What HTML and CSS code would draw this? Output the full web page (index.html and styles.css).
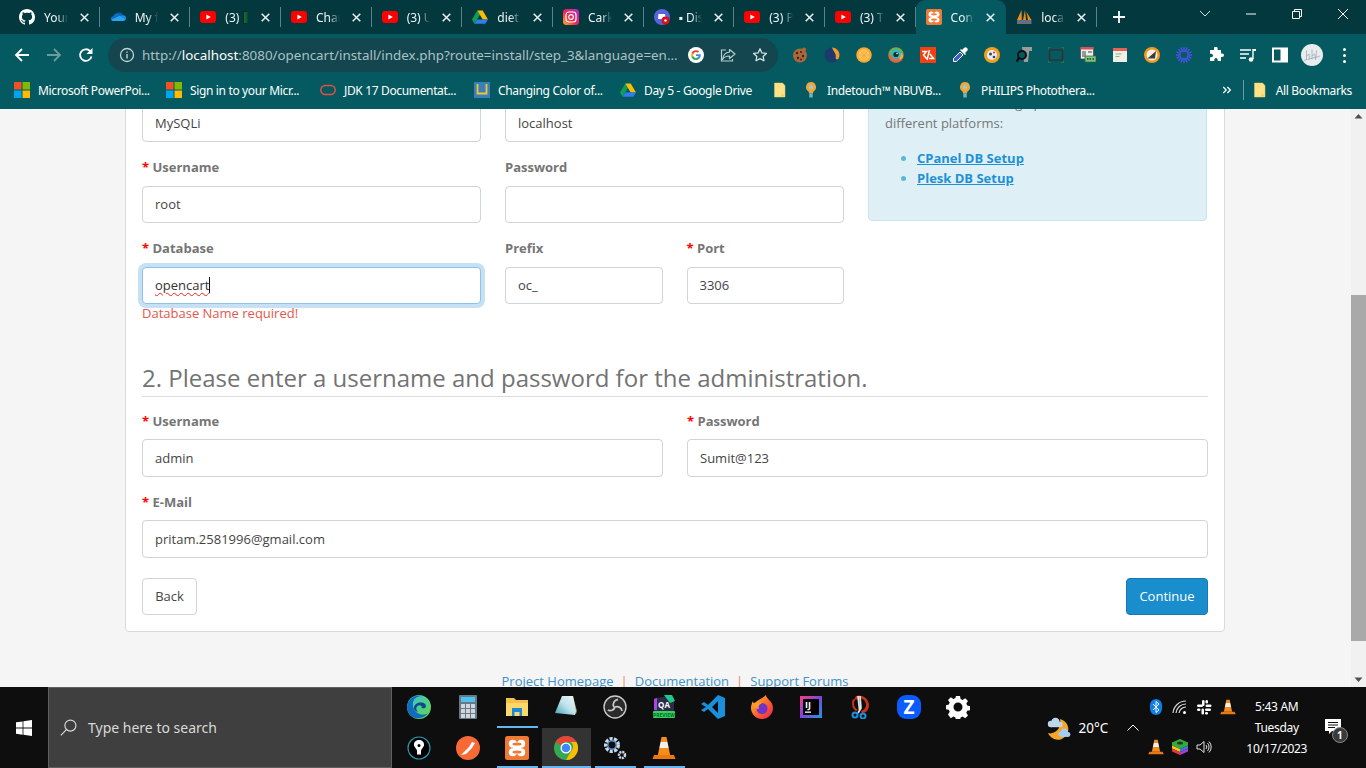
FILE: index.html
```html
<!DOCTYPE html>
<html lang="en">
<head>
<meta charset="utf-8">
<title>OpenCart Installer</title>
<link rel="stylesheet" href="styles.css">
</head>
<body>
<svg class="defs" aria-hidden="true">
<defs>
<symbol id="x" viewBox="0 0 9 9"><path d="M.7.7l7.600 7.600M8.300.7.700 8.300" stroke="#edf3f3" stroke-width="1.500"/></symbol>
<symbol id="yt" viewBox="0 0 16 16"><rect y="2" width="16" height="12" rx="3.200" fill="#f00"/><path d="M6.400 5.400v5.200L10.800 8z" fill="#fff"/></symbol>
<symbol id="gh" viewBox="0 0 16 16"><path fill="#fff" d="M8 0C3.580 0 0 3.580 0 8c0 3.540 2.290 6.530 5.470 7.590.4.070.55-.17.55-.38 0-.19-.01-.82-.01-1.490-2.010.37-2.530-.49-2.690-.94-.09-.23-.48-.94-.82-1.130-.28-.15-.68-.52-.01-.53.63-.01 1.080.58 1.230.82.72 1.210 1.870.87 2.330.66.07-.52.28-.87.51-1.070-1.780-.2-3.640-.89-3.640-3.950 0-.87.31-1.590.82-2.150-.08-.2-.36-1.020.08-2.120 0 0 .67-.21 2.200.82.64-.18 1.320-.27 2-.27.68 0 1.360.09 2 .27 1.530-1.040 2.200-.82 2.200-.82.44 1.100.16 1.920.08 2.120.51.56.82 1.270.82 2.150 0 3.070-1.870 3.750-3.650 3.950.29.25.54.73.54 1.480 0 1.070-.01 1.930-.01 2.200 0 .21.15.46.55.38A8.013 8.013 0 0016 8c0-4.420-3.580-8-8-8z"/></symbol>
<symbol id="od" viewBox="0 0 16 16"><path fill="#0c5fb8" d="M6.400 4.600a4 4 0 0 1 6.600 1.700 3 3 0 0 1 .4 0L9 10z"/><path fill="#1490df" d="M6.400 4.600 9.600 7l3.400-.7a2.700 2.700 0 0 1 3 3 2.600 2.600 0 0 1-.4 1.300L9 9z"/><path fill="#0b6fc9" d="M6.400 4.600A3.600 3.600 0 0 0 3.500 7 3 3 0 0 0 1 10.400L7 8.600l2.600-1.600z"/><path fill="#2aa4f0" d="M1 10.400a2.600 2.600 0 0 0 2.400 1.700H13.500a2.700 2.700 0 0 0 2.100-1.500L9.600 7z"/></symbol>
<symbol id="drive" viewBox="0 0 16 16"><path fill="#0f9d58" d="M5.300 1.500 0 10.600l2.600 4.100L8 5.700z"/><path fill="#fbbc04" d="M5.300 1.500h5.400L16 10.600h-5.300z"/><path fill="#2f7df0" d="M2.600 14.700h10.800l2.600-4.100H5.300z"/></symbol>
<symbol id="ig" viewBox="0 0 16 16"><defs><linearGradient id="iggrad" x1="0" y1="1" x2="1" y2="0"><stop offset="0" stop-color="#fdb32b"/><stop offset=".45" stop-color="#f0254f"/><stop offset="1" stop-color="#a62bd0"/></linearGradient></defs><rect width="16" height="16" rx="3.500" fill="url(#iggrad)"/><rect x="3" y="3" width="10" height="10" rx="3" fill="none" stroke="#fff" stroke-width="1.200"/><circle cx="8" cy="8" r="2.300" fill="none" stroke="#fff" stroke-width="1.200"/></symbol>
<symbol id="disc" viewBox="0 0 16 16"><circle cx="8" cy="8" r="8" fill="#5865d8"/><path d="M4.500 5h6.500l.8 5H9.500l-1 .6L7 10H4z" fill="#fff"/><circle cx="11.500" cy="11.500" r="4" fill="#d9101c"/><circle cx="11.500" cy="11.500" r="1.200" fill="#fff"/></symbol>
<symbol id="xampp" viewBox="0 0 24 24"><rect width="24" height="24" rx="2.500" fill="#ef7a35"/><g fill="#fff"><circle cx="7.800" cy="7.800" r="4"/><circle cx="16.200" cy="7.800" r="4"/><circle cx="7.800" cy="16.200" r="4"/><circle cx="16.200" cy="16.200" r="4"/><rect x="8" y="6" width="8" height="12"/></g><g fill="#ef7a35"><ellipse cx="12" cy="8" rx="4.600" ry="1.600"/><ellipse cx="12" cy="16" rx="4.600" ry="1.600"/></g></symbol>
<symbol id="pma" viewBox="0 0 16 16"><path d="M5.500 1 1 11h4.800zM9 1 7 11h3zM10.500 3l1.500 8h3.500z" fill="#ef8c1c"/><rect x="1" y="11" width="14.500" height="4" fill="#666e80"/></symbol>
<symbol id="win" viewBox="0 0 16 16"><path fill="#f25022" d="M0 0h7.500v7.500H0z"/><path fill="#7fba00" d="M8.500 0H16v7.500H8.500z"/><path fill="#00a4ef" d="M0 8.500h7.500V16H0z"/><path fill="#ffb900" d="M8.500 8.500H16V16H8.500z"/></symbol>
<symbol id="oracle" viewBox="0 0 16 16"><rect x=".8" y="3.500" width="14.400" height="9" rx="4.500" fill="none" stroke="#e4503c" stroke-width="1.500"/></symbol>
<symbol id="ublue" viewBox="0 0 16 16"><rect width="16" height="16" fill="#3b7fb8"/><path d="M3.500 2v9.500h9V2" fill="none" stroke="#f0c636" stroke-width="1.800"/></symbol>
<symbol id="note" viewBox="0 0 16 16"><path d="M2.500 1h8L13 3.500V15H2.500z" fill="#fde28a" stroke="#e9c95f" stroke-width=".5"/><path d="M9.500 15v-2.500H13z" fill="#e9c95f"/></symbol>
<symbol id="pin" viewBox="0 0 16 16"><path d="M8 0a5 5 0 0 0-3 9c.8.700 1 1.500 1 2.500h4c0-1 .2-1.800 1-2.500A5 5 0 0 0 8 0z" fill="#f0a63a"/><circle cx="8" cy="5" r="2" fill="#8ed0e0"/><rect x="6.300" y="11.500" width="3.400" height="4" fill="#6fb5c6"/></symbol>
<symbol id="chev2" viewBox="0 0 16 16"><path d="M3 4l4 4-4 4M8.500 4l4 4-4 4" fill="none" stroke="#fff" stroke-width="1.700"/></symbol>
<symbol id="g" viewBox="0 0 16 16"><circle cx="8" cy="8" r="8" fill="#fff"/><path d="M12.700 8.200c0-.4 0-.7-.1-1H8v1.900h2.600a2.300 2.300 0 0 1-1 1.500v1.200h1.600c1-.9 1.500-2.200 1.500-3.600z" fill="#4285f4"/><path d="M8 13c1.300 0 2.400-.4 3.200-1.200l-1.600-1.200c-.4.300-1 .5-1.600.5-1.300 0-2.300-.8-2.700-2H3.600v1.300A5 5 0 0 0 8 13z" fill="#34a853"/><path d="M5.300 9.100a3 3 0 0 1 0-2V5.800H3.600a5 5 0 0 0 0 4.500z" fill="#fbbc05"/><path d="M8 5c.7 0 1.300.2 1.800.7l1.400-1.400A5 5 0 0 0 3.600 5.800l1.700 1.300C5.700 5.900 6.700 5 8 5z" fill="#ea4335"/></symbol>
<symbol id="share" viewBox="0 0 16 16"><path d="M9.500 2.500 15 7l-5.500 4.500V9C6 9 4 10 2.500 12.500 3 8.500 5.500 5.500 9.500 5z" fill="none" stroke="#b9cccd" stroke-width="1.200" stroke-linejoin="round"/><path d="M6 3H1.500v11h11v-2" fill="none" stroke="#b9cccd" stroke-width="1.200"/></symbol>
<symbol id="star" viewBox="0 0 16 16"><path d="M8 1.800l1.900 4.100 4.500.5-3.300 3 .9 4.400L8 11.600 4 13.800l.9-4.400-3.300-3 4.500-.5z" fill="none" stroke="#d5e0e1" stroke-width="1.300" stroke-linejoin="round"/></symbol>
<symbol id="cookie" viewBox="0 0 16 16"><circle cx="8" cy="8.500" r="7" fill="#a9683a"/><circle cx="12" cy="2.500" r="2" fill="#a9683a"/><g fill="#3f2415"><circle cx="5" cy="6" r="1.200"/><circle cx="9" cy="5" r="1"/><circle cx="11" cy="9" r="1.200"/><circle cx="6" cy="11" r="1.200"/><circle cx="9" cy="12.500" r=".9"/></g></symbol>
<symbol id="moonbi" viewBox="0 0 16 16"><circle cx="8" cy="8" r="7.500" fill="#1d3a6e"/><path d="M8 .5a7.500 7.500 0 0 1 6.500 11.200c-.7.800-1.800 1.100-2.500.3-.8-1 .2-2.500-.5-4.500C10.800 5 9 3.500 8 .5z" fill="#f39c2c"/></symbol>
<symbol id="orangef" viewBox="0 0 16 16"><circle cx="8" cy="8" r="7.800" fill="#f7a72f"/><circle cx="8" cy="8" r="6" fill="#fcc35a"/><path d="M8 2v12M2 8h12M4 4l8 8M12 4l-8 8" stroke="#f7a72f" stroke-width=".7"/></symbol>
<symbol id="eye" viewBox="0 0 16 16"><circle cx="8" cy="8" r="7.800" fill="#e2683e"/><path d="M1 5a7.800 7.800 0 0 1 14 0l-1 3H2z" fill="#5cb85c"/><path d="M14 6a7 7 0 0 1 1 4l-3 3-2-5z" fill="#e8b33a"/><circle cx="8" cy="7.500" r="4.700" fill="#2bb8c9"/><circle cx="8" cy="7.500" r="2.600" fill="#1c2833"/><circle cx="9" cy="6.500" r=".8" fill="#fff"/></symbol>
<symbol id="redcode" viewBox="0 0 16 16"><rect width="16" height="16" fill="#f4400f"/><path d="M2 4.500h4.500L3.500 8l3 3.500M7 13l2.500-10M10 7l3.500 4.500H9" fill="none" stroke="#fff" stroke-width="1.500"/></symbol>
<symbol id="dropper" viewBox="0 0 16 16"><path d="M8 5 1.500 11.500V14.500H4.500L11 8z" fill="#3f5bd0" stroke="#fff" stroke-width="1"/><path d="M8 3l5 5 1-1-1-1 2-2a1.500 1.500 0 0 0-3-3l-2 2-1-1z" fill="#fff"/></symbol>
<symbol id="ball" viewBox="0 0 16 16"><circle cx="8" cy="8" r="8" fill="#f3a01e"/><circle cx="8" cy="8" r="5" fill="#e8edf2"/><circle cx="6.500" cy="7" r="1.500" fill="#33415c"/><circle cx="10" cy="10" r="1.300" fill="#33415c"/><circle cx="10" cy="5.500" r="1" fill="#c0392b"/></symbol>
<symbol id="magn" viewBox="0 0 16 16"><path d="M6 0h10v4h-3v2l-1 9H8z" fill="#9c9c9c"/><circle cx="6" cy="8" r="4" fill="#045a60" stroke="#111" stroke-width="2"/><path d="M3 11l-2.500 3.500" stroke="#111" stroke-width="2.200"/></symbol>
<symbol id="frame" viewBox="0 0 16 16"><rect x="1.500" y="3" width="13" height="10" fill="none" stroke="#3b2b30" stroke-width="1.300"/><path d="M0 3V0h3M13 0h3v3M16 13v3h-3M3 16H0v-3" fill="none" stroke="#2f8a3b" stroke-width="1"/></symbol>
<symbol id="tbl" viewBox="0 0 16 16"><rect x=".5" y="0" width="13" height="12" fill="#eceff1" stroke="#444" stroke-width=".7"/><rect x=".5" y="0" width="13" height="2.500" fill="#d9534f"/><path d="M2 5h4M2 7h4M2 9h4M8 5h4" stroke="#444"/><rect x="5" y="9" width="11" height="6" fill="#7fc47f" stroke="#2f6b2f" stroke-width=".7"/><path d="M7 12h1.500M9.500 12H11M12.500 12H14" stroke="#1c3d1c" stroke-width="1.500"/></symbol>
<symbol id="card" viewBox="0 0 16 16"><rect x="1" y="1" width="14" height="14" fill="#f2efe6"/><rect x="1" y="1" width="14" height="3" fill="#e8605a"/><path d="M3.500 7h6M3.500 9.500h4" stroke="#7fbf7f" stroke-width="1.200"/></symbol>
<symbol id="tri" viewBox="0 0 16 16"><circle cx="8" cy="8" r="8" fill="#f39a1e"/><circle cx="8" cy="8" r="5.500" fill="#f7f1e3"/><path d="M3.500 11.500 12 4l-1 7.500z" fill="#3c3c3c"/></symbol>
<symbol id="burst" viewBox="0 0 16 16"><g stroke="#4a52e0" stroke-width="1.500"><path d="M8 0v16M0 8h16M2.300 2.300l11.400 11.400M13.700 2.300 2.300 13.700M4.900.5l6.200 15M11.100.5l-6.200 15M.5 4.900l15 6.200M15.500 4.900l-15 6.200"/></g><circle cx="8" cy="8" r="3.300" fill="#045a60"/></symbol>
<symbol id="puzzle" viewBox="0 0 16 16"><path fill="#fff" d="M6 1.500a1.800 1.800 0 0 1 3.600 0V3h3.400v3.400h1.200a1.800 1.800 0 0 1 0 3.600H13v4H9.700v-1.200a1.700 1.700 0 0 0-3.400 0V14H2v-3.700h1.200a1.800 1.800 0 0 0 0-3.600H2V3h4z"/></symbol>
<symbol id="queue" viewBox="0 0 16 16"><path d="M0 3h11M0 7h9M0 11h6" stroke="#fff" stroke-width="1.400"/><path d="M13 2v10" stroke="#fff" stroke-width="1.400"/><path d="M13 2h3v2h-3z" fill="#fff"/><circle cx="11" cy="12.500" r="2.300" fill="#fff"/></symbol>
<symbol id="side" viewBox="0 0 16 16"><rect x="1" y="1.500" width="14" height="13" fill="none" stroke="#fff" stroke-width="2"/><rect x="8.500" y="2" width="6" height="12" fill="#fff"/></symbol>
<symbol id="avatar" viewBox="0 0 24 24"><circle cx="12" cy="12" r="12" fill="#e8ecef"/><path d="M6 7v10M6 13l3-2v6M12 6v11M12 13l3-2 1 6M17 7l-1 10M3 18c5-2 13-3 18-5" fill="none" stroke="#9aa7b0" stroke-width=".8"/></symbol>
<symbol id="edge" viewBox="0 0 24 24"><defs><linearGradient id="edgegrad" x1="0" y1="0" x2="1" y2="1"><stop offset="0" stop-color="#37c6d0"/><stop offset="1" stop-color="#67d24e"/></linearGradient></defs><circle cx="12" cy="12" r="12" fill="url(#edgegrad)"/><path d="M0 12C1 3 9-1 15 1 8 1 5 6 6 11c1 7 9 11 15 7-4 6-13 7-18 2a12 12 0 0 1-3-8z" fill="#0f6cbd"/><path d="M7 13c0-4 4-6 8-5.500 3 .5 5 3 3.500 5-1 1-3 1-4 .5 1-2-1-3-3-2.500S8 14 11 17c-2-.5-4-2-4-4z" fill="#0a4a8f"/></symbol>
<symbol id="calc" viewBox="0 0 24 24"><rect x="3" width="18" height="24" rx="1" fill="#6a7785"/><rect x="5" y="2" width="14" height="5" fill="#4cc2f1"/><g fill="#cfd6dc"><path d="M5 9h4v4H5zM10 9h4v4h-4zM15 9h4v4h-4zM5 14h4v4H5zM10 14h4v4h-4zM15 14h4v4h-4zM5 19h4v4H5zM10 19h4v4h-4zM15 19h4v4h-4z"/></g></symbol>
<symbol id="folder" viewBox="0 0 24 24"><path d="M1 3h8l2 2h12v16H1z" fill="#f5c14a"/><path d="M1 8h22v13H1z" fill="#fbd86b"/><path d="M7 13h10v8h-2.500v-4h-5v4H7z" fill="#1d88d9"/></symbol>
<symbol id="notep" viewBox="0 0 24 24"><defs><linearGradient id="npgrad" x1="0" y1="1" x2="1" y2="0"><stop offset="0" stop-color="#3fa0b8"/><stop offset=".5" stop-color="#bfe2ea"/><stop offset="1" stop-color="#f0f7f8"/></linearGradient></defs><path d="M19 1l4 15-1 3-4-2z" fill="#a98a55"/><path d="M8 1h11l3 15-1 4-20-2z" fill="url(#npgrad)"/></symbol>
<symbol id="obs" viewBox="0 0 24 24"><circle cx="12" cy="12" r="11" fill="#2b2b2b" stroke="#c9c9c9" stroke-width="1.400"/><g fill="none" stroke="#c9c9c9" stroke-width="1.800"><path d="M15 4.500a5 5 0 0 0-4 7.500M4.800 15a5 5 0 0 0 7.200-3M19 16a5 5 0 0 0-7-4"/></g></symbol>
<symbol id="qa" viewBox="0 0 24 24"><path d="M3 3l17-2 2 5v10H2z" fill="#2b2b4a"/><path d="M2 4l3-1v12H2z" fill="#b044e0"/><path d="M12 0h8l3 6-5 2z" fill="#1ec98b"/><text x="12" y="12.500" class="qa-t" text-anchor="middle">QA</text><rect x="1" y="16" width="22" height="7" rx="1" fill="#38d15c"/><text x="12" y="21.700" class="qa-s" text-anchor="middle">PREVIEW</text></symbol>
<symbol id="vsc" viewBox="0 0 24 24"><path d="M17 0l7 3v18l-7 3L7 14l-4 3-3-2 5-3-5-3 3-2 4 3zM17 6l-6 6 6 6z" fill="#1a8fdc"/></symbol>
<symbol id="ff" viewBox="0 0 24 24"><defs><linearGradient id="ffgrad" x1="0" y1="0" x2="1" y2="1"><stop offset="0" stop-color="#ffc229"/><stop offset=".6" stop-color="#ff5a2c"/><stop offset="1" stop-color="#e01d69"/></linearGradient></defs><path d="M16 0c0 4 7 6 7 13a11 11 0 0 1-22 0c0-3 1-5 2-7 0 2 1 2 2 3 1-4 6-4 11-9z" fill="url(#ffgrad)"/><circle cx="12" cy="13.500" r="5.500" fill="#7134c8"/><path d="M3 9c3-3 7-2 9 0-3 0-4 2-3 5-3 0-5-2-6-5z" fill="#ff9a2c"/></symbol>
<symbol id="ij" viewBox="0 0 24 24"><defs><linearGradient id="ijgrad" x1="0" y1="0" x2="1" y2="1"><stop offset="0" stop-color="#fc3e80"/><stop offset=".5" stop-color="#7b45e0"/><stop offset="1" stop-color="#1c9de0"/></linearGradient></defs><rect x="1" y="1" width="22" height="22" fill="url(#ijgrad)"/><rect x="4" y="4" width="16" height="16" fill="#000"/><text x="6" y="13" class="ij-t">IJ</text><rect x="6" y="16.500" width="6" height="1.300" fill="#fff"/></symbol>
<symbol id="sciss" viewBox="0 0 24 24"><path d="M8 1a10 10 0 0 1 13 9c0 5-3 8-7 8l-1-2c3-1 5-3 5-6 0-3-2-6-5-6.500L6 5z" fill="#c7331b"/><path d="M7 5c-2 3-1 8 3 10l-2 1C4 14 3 8 5 4z" fill="#c7331b"/><path d="M10 1l1.500 14M12 1l1 12-3 5" stroke="#e6e6e6" stroke-width="1.700" fill="none"/><circle cx="7" cy="20" r="2.500" fill="none" stroke="#1f8fe0" stroke-width="2"/><circle cx="15" cy="21" r="2.500" fill="none" stroke="#1f8fe0" stroke-width="2"/></symbol>
<symbol id="zoomz" viewBox="0 0 24 24"><rect width="24" height="24" rx="9" fill="#0b5cff"/><text x="12" y="18.500" class="z-t" text-anchor="middle">Z</text></symbol>
<symbol id="gear" viewBox="0 0 24 24"><path fill="#fff" fill-rule="evenodd" d="M10 1h4l.6 3 2 .9 2.600-1.700 2.800 2.800-1.700 2.600.9 2 3 .6v4l-3 .6-.9 2 1.700 2.600-2.800 2.800-2.600-1.700-2 .9-.6 3h-4l-.6-3-2-.9-2.600 1.700L2 19.400l1.700-2.600-.9-2-3-.6v-4l3-.6.9-2L2 5l2.800-2.800L7.400 3.900l2-.9zM12 7.500a4.500 4.500 0 1 0 0 9 4.500 4.500 0 0 0 0-9z"/></symbol>
<symbol id="inkp" viewBox="0 0 24 24"><circle cx="12" cy="12" r="11" fill="#000" stroke="#2a96ad" stroke-width="1.200"/><path d="M12 4c3.500 0 5.500 2.500 5 5.500-.5 2-2.500 3-3 5v4h-4v-4c-.5-2-2.500-3-3-5C6.500 6.500 8.500 4 12 4z" fill="#fff"/><circle cx="12" cy="9.500" r="1.500" fill="#000"/></symbol>
<symbol id="postman" viewBox="0 0 24 24"><circle cx="12" cy="12" r="12" fill="#f76935"/><path d="M5 19l8-8 3-5 3 1-3 5-6 6z" fill="#fff"/></symbol>
<symbol id="chrome" viewBox="0 0 24 24"><circle cx="12" cy="12" r="12" fill="#34a853"/><path d="M12 0a12 12 0 0 1 10.400 6H12a6 6 0 0 0-5.200 3L1.600 6A12 12 0 0 1 12 0z" fill="#ea4335"/><path d="M22.400 6A12 12 0 0 1 12 24l5.200-9a6 6 0 0 0-.2-9z" fill="#fbbc04"/><circle cx="12" cy="12" r="5.500" fill="#fff"/><circle cx="12" cy="12" r="4.300" fill="#4285f4"/></symbol>
<symbol id="gears" viewBox="0 0 24 24"><circle cx="9" cy="9" r="6" fill="none" stroke="#c9d7e6" stroke-width="4" stroke-dasharray="3 1.200"/><circle cx="9" cy="9" r="4.200" fill="none" stroke="#4e8fc9" stroke-width="1.500"/><circle cx="19" cy="19" r="3" fill="none" stroke="#c9d7e6" stroke-width="2.500" stroke-dasharray="2 .8"/></symbol>
<symbol id="vlc" viewBox="0 0 24 24"><path d="M9.500 1h5l1 5h-7z" fill="#f78c1e"/><path d="M8.500 6h7l1.200 6H7.300z" fill="#f3f0e8"/><path d="M7.300 12h9.400l1.500 7H5.800z" fill="#f78c1e"/><path d="M2 19h20l1.500 4h-23z" fill="#e8780f"/></symbol>
<symbol id="weather" viewBox="0 0 24 24"><path d="M13 3a10.500 10.500 0 1 1-12 14c6 2 14-4 12-14z" fill="#f5a623"/><g fill="#bcd6ee"><circle cx="4" cy="8" r="3.200"/><circle cx="8.500" cy="6" r="4.200"/><circle cx="13" cy="8.500" r="2.700"/><rect x="4" y="8" width="9" height="3.200"/></g><g fill="#a9cdf0"><circle cx="14" cy="18" r="2.600"/><circle cx="17.500" cy="16" r="3.500"/><circle cx="21" cy="18.500" r="2.400"/><rect x="14" y="18" width="7" height="2.900"/></g></symbol>
<symbol id="bt" viewBox="0 0 12 16"><rect width="12" height="16" rx="6" fill="#0f7ee8"/><path d="M3 5l6 6-3 2.500v-11L9 5l-6 6" fill="none" stroke="#fff" stroke-width="1"/></symbol>
<symbol id="wifi" viewBox="0 0 16 16"><g fill="none" stroke="#d8d8d8" stroke-width="1.200"><path d="M1 14a13 13 0 0 1 13-12M4 14a10 10 0 0 1 10-9M7 14a7 7 0 0 1 7-6"/></g><circle cx="12.500" cy="13.500" r="1.500" fill="#fff"/></symbol>
<symbol id="slack" viewBox="0 0 16 16"><g fill="#fff"><rect x="6" y="1" width="2.500" height="6" rx="1.250"/><rect x="1" y="5.500" width="6" height="2.500" rx="1.250"/><rect x="9.500" y="5.500" width="6" height="2.500" rx="1.250"/><rect x="9.500" y="1" width="2.500" height="3.500" rx="1.250"/><rect x="1" y="9.500" width="3.500" height="2.500" rx="1.250"/><rect x="5.500" y="9.500" width="2.500" height="6" rx="1.250"/><rect x="9" y="9.500" width="6" height="2.500" rx="1.250"/><rect x="9" y="13" width="3" height="2.500" rx="1.250"/></g></symbol>
<symbol id="stack" viewBox="0 0 16 16"><path d="M8 0l8 3.500v3L8 10 0 6.500v-3z" fill="#38a838"/><path d="M0 6.500 8 10v3L0 9.500z" fill="#f2c81e"/><path d="M16 6.500 8 10v3l8-3.500z" fill="#2f7de0"/><path d="M0 9.500 8 13v3L0 12.500z" fill="#e23a3a"/><path d="M16 9.500 8 13v3l8-3.500z" fill="#b03ad0"/><ellipse cx="8" cy="4" rx="3" ry="1.600" fill="#1b3a2a"/></symbol>
<symbol id="speaker" viewBox="0 0 16 16"><path d="M1 6h3l4-3.500v11L4 10H1z" fill="none" stroke="#e0e0e0"/><path d="M10 6a3 3 0 0 1 0 4M11.500 4a6 6 0 0 1 0 8M13 2.500a8 8 0 0 1 0 11" fill="none" stroke="#e0e0e0"/></symbol>
<symbol id="notif" viewBox="0 0 16 16"><path d="M0 0h16v12H7l-3 3v-3H0z" fill="#fff"/><path d="M3 3.500h10M3 6h10M3 8.500h7" stroke="#111"/></symbol>
</defs>
</svg>

<div class="tabstrip">
  <div class="tab"><svg class="fav"><use href="#gh"/></svg><span class="tt">Your Repositories</span><svg class="tx"><use href="#x"/></svg></div>
  <div class="tab"><svg class="fav"><use href="#od"/></svg><span class="tt">My files</span><svg class="tx"><use href="#x"/></svg></div>
  <div class="tab"><svg class="fav"><use href="#yt"/></svg><span class="tt">(3) <i class="greenmark"></i></span><svg class="tx"><use href="#x"/></svg></div>
  <div class="tab"><svg class="fav"><use href="#yt"/></svg><span class="tt">Channel</span><svg class="tx"><use href="#x"/></svg></div>
  <div class="tab"><svg class="fav"><use href="#yt"/></svg><span class="tt">(3) Uploads</span><svg class="tx"><use href="#x"/></svg></div>
  <div class="tab"><svg class="fav"><use href="#drive"/></svg><span class="tt">diet</span><svg class="tx"><use href="#x"/></svg></div>
  <div class="tab"><svg class="fav"><use href="#ig"/></svg><span class="tt">Carkeek</span><svg class="tx"><use href="#x"/></svg></div>
  <div class="tab"><svg class="fav"><use href="#disc"/></svg><span class="tt">▪ Discord</span><svg class="tx"><use href="#x"/></svg></div>
  <div class="tab"><svg class="fav"><use href="#yt"/></svg><span class="tt">(3) Playlist</span><svg class="tx"><use href="#x"/></svg></div>
  <div class="tab"><svg class="fav"><use href="#yt"/></svg><span class="tt">(3) Tutorial</span><svg class="tx"><use href="#x"/></svg></div>
  <div class="tab active"><svg class="fav"><use href="#xampp"/></svg><span class="tt">Continue</span><svg class="tx"><use href="#x"/></svg></div>
  <div class="tab last"><svg class="fav"><use href="#pma"/></svg><span class="tt">localhost</span><svg class="tx"><use href="#x"/></svg></div>
  <svg class="newtab" viewBox="0 0 12 12"><path d="M6 0v12M0 6h12" stroke="#fff" stroke-width="1.800"/></svg>
  <div class="wincontrols">
    <svg class="wc" viewBox="0 0 46 14"><path d="M18 4l5 5 5-5" fill="none" stroke="#d5e0e1"/></svg>
    <svg class="wc" viewBox="0 0 46 14"><path d="M18 7h10" stroke="#fff"/></svg>
    <svg class="wc" viewBox="0 0 46 14"><path d="M18.500 4.500h7v7h-7zM20.500 4.500v-2h7v7h-2" fill="none" stroke="#fff"/></svg>
    <svg class="wc" viewBox="0 0 46 14"><path d="M18 2l10 10M28 2 18 12" stroke="#fff"/></svg>
  </div>
</div>

<div class="toolbar">
  <svg class="nav" viewBox="0 0 16 16"><path d="M15 8H2M8 2 2 8l6 6" fill="none" stroke="#fff" stroke-width="1.800"/></svg>
  <svg class="nav" viewBox="0 0 16 16"><path d="M1 8h13M8 2l6 6-6 6" fill="none" stroke="#6f9a9d" stroke-width="1.800"/></svg>
  <svg class="nav" viewBox="0 0 16 16"><path d="M13.500 9.500A5.800 5.800 0 1 1 12 4l1.500 1.500" fill="none" stroke="#fff" stroke-width="1.800"/><path d="M14.500 1v6h-6z" fill="#fff"/></svg>
  <div class="omnibox">
    <svg class="info" viewBox="0 0 16 16"><circle cx="8" cy="8" r="6.500" fill="none" stroke="#c3d3d4" stroke-width="1.300"/><path d="M8 7v4.500M8 4.500v1.300" stroke="#c3d3d4" stroke-width="1.400"/></svg>
    <span class="url">http://<b>localhost</b>:8080/opencart/install/index.php?route=install/step_3&amp;language=en...</span>
    <svg class="ob"><use href="#g"/></svg>
    <svg class="ob"><use href="#share"/></svg>
    <svg class="ob"><use href="#star"/></svg>
  </div>
  <div class="exts">
    <span class="ext"><svg><use href="#cookie"/></svg></span>
    <span class="ext"><svg><use href="#moonbi"/></svg></span>
    <span class="ext"><svg><use href="#orangef"/></svg></span>
    <span class="ext"><svg><use href="#eye"/></svg></span>
    <span class="ext"><svg><use href="#redcode"/></svg></span>
    <span class="ext"><svg><use href="#dropper"/></svg></span>
    <span class="ext"><svg><use href="#ball"/></svg></span>
    <span class="ext"><svg><use href="#magn"/></svg></span>
    <span class="ext"><svg><use href="#frame"/></svg></span>
    <span class="ext"><svg><use href="#tbl"/></svg></span>
    <span class="ext"><svg><use href="#card"/></svg></span>
    <span class="ext"><svg><use href="#tri"/></svg></span>
    <span class="ext"><svg><use href="#burst"/></svg></span>
    <span class="ext"><svg><use href="#puzzle"/></svg></span>
    <span class="ext"><svg><use href="#queue"/></svg></span>
    <span class="ext"><svg><use href="#side"/></svg></span>
    <span class="ext"><svg class="av"><use href="#avatar"/></svg></span>
    <span class="ext dots"><i></i><i></i><i></i></span>
  </div>
</div>

<div class="bookmarks">
  <a class="bm w152"><svg><use href="#win"/></svg>Microsoft PowerPoi...</a>
  <a class="bm w154"><svg><use href="#win"/></svg>Sign in to your Micr...</a>
  <a class="bm w154"><svg><use href="#oracle"/></svg>JDK 17 Documentat...</a>
  <a class="bm w146"><svg><use href="#ublue"/></svg>Changing Color of...</a>
  <a class="bm w152"><svg><use href="#drive"/></svg>Day 5 - Google Drive</a>
  <a class="bm w31"><svg><use href="#note"/></svg></a>
  <a class="bm w154"><svg><use href="#pin"/></svg>Indetouch™ NBUVB...</a>
  <a class="bm"><svg><use href="#pin"/></svg>PHILIPS Phototherа...</a>
  <svg class="more"><use href="#chev2"/></svg>
  <span class="bmsep"></span>
  <a class="bm allb"><svg><use href="#note"/></svg>All Bookmarks</a>
</div>

<div class="viewport">
  <div class="page">
    <div class="shift">
      <div class="card">
        <div class="top-grid">
          <div>
            <div class="row two">
              <div class="field"><label class="lbl"><em>*</em> Driver</label><input class="input" value="MySQLi"></div>
              <div class="field"><label class="lbl"><em>*</em> Hostname</label><input class="input" value="localhost"></div>
            </div>
            <div class="row two">
              <div class="field"><label class="lbl"><em>*</em> Username</label><input class="input" value="root"></div>
              <div class="field"><label class="lbl">Password</label><input class="input" value=""></div>
            </div>
            <div class="row two">
              <div class="field">
                <label class="lbl"><em>*</em> Database</label>
                <div class="input focused"><span class="spell">opencart</span><span class="caret"></span></div>
                <div class="err">Database Name required!</div>
              </div>
              <div class="two">
                <div class="field"><label class="lbl">Prefix</label><input class="input" value="oc_"></div>
                <div class="field"><label class="lbl"><em>*</em> Port</label><input class="input" value="3306"></div>
              </div>
            </div>
          </div>
          <aside class="alert">
            <p>Instructions for setting up a database on<br>different platforms:</p>
            <ul>
              <li><a>CPanel DB Setup</a></li>
              <li><a>Plesk DB Setup</a></li>
            </ul>
          </aside>
        </div>
        <h2 class="legend">2. Please enter a username and password for the administration.</h2>
        <div class="row two">
          <div class="field"><label class="lbl"><em>*</em> Username</label><input class="input" value="admin"></div>
          <div class="field"><label class="lbl"><em>*</em> Password</label><input class="input" value="Sumit@123"></div>
        </div>
        <div class="row">
          <div class="field"><label class="lbl"><em>*</em> E-Mail</label><input class="input" value="pritam.2581996@gmail.com"></div>
        </div>
        <div class="actions">
          <button class="btn">Back</button>
          <button class="btn primary">Continue</button>
        </div>
      </div>
      <footer class="foot"><a>Project Homepage</a><span>|</span><a>Documentation</a><span>|</span><a>Support Forums</a></footer>
    </div>
  </div>
  <div class="scrollbar">
    <svg class="arrow" viewBox="0 0 15 15"><path d="M3.500 9.500 7.500 5l4 4.500z" fill="#505050"/></svg>
    <div class="thumb"></div>
    <svg class="arrow down" viewBox="0 0 15 15"><path d="M3.500 5.500 7.500 10l4-4.500z" fill="#505050"/></svg>
  </div>
</div>

<div class="taskbar">
  <div class="start"><svg viewBox="0 0 16 16"><path fill="#fff" d="M0 2.300 6.600 1.400v6.200H0zM7.400 1.300 16 0v7.600H7.400zM0 8.400h6.600v6.300L0 13.800zM7.400 8.400H16V16l-8.600-1.200z"/></svg></div>
  <div class="search">
    <svg viewBox="0 0 16 16"><circle cx="9.800" cy="6.200" r="5.200" fill="none" stroke="#d8d8d8" stroke-width="1.100"/><path d="M6 10 .8 15.400" stroke="#d8d8d8" stroke-width="1.100"/></svg>
    <span>Type here to search</span>
  </div>
  <div class="apps">
    <span class="app"><svg><use href="#edge"/></svg></span>
    <span class="app"><svg><use href="#calc"/></svg></span>
    <span class="app run"><svg><use href="#folder"/></svg></span>
    <span class="app"><svg><use href="#notep"/></svg></span>
    <span class="app"><svg><use href="#obs"/></svg></span>
    <span class="app"><svg><use href="#qa"/></svg></span>
    <span class="app"><svg><use href="#vsc"/></svg></span>
    <span class="app"><svg><use href="#ff"/></svg></span>
    <span class="app"><svg><use href="#ij"/></svg></span>
    <span class="app"><svg><use href="#sciss"/></svg></span>
    <span class="app"><svg><use href="#zoomz"/></svg></span>
    <span class="app"><svg><use href="#gear"/></svg></span>
    <span class="app"><svg><use href="#inkp"/></svg></span>
    <span class="app"><svg><use href="#postman"/></svg></span>
    <span class="app run"><svg><use href="#xampp"/></svg></span>
    <span class="app run act"><svg><use href="#chrome"/></svg></span>
    <span class="app run"><svg><use href="#gears"/></svg></span>
    <span class="app run"><svg><use href="#vlc"/></svg></span>
  </div>
  <div class="weather"><svg><use href="#weather"/></svg><span>20°C</span></div>
  <svg class="caretup" viewBox="0 0 12 7"><path d="M.5 6.500 6 1l5.500 5.500" fill="none" stroke="#fff"/></svg>
  <div class="tray">
    <span><svg><use href="#bt"/></svg></span>
    <span><svg><use href="#wifi"/></svg></span>
    <span><svg><use href="#slack"/></svg></span>
    <span><svg><use href="#vlc"/></svg></span>
    <span><svg><use href="#vlc"/></svg></span>
    <span><svg><use href="#stack"/></svg></span>
    <span><svg><use href="#speaker"/></svg></span>
  </div>
  <div class="clock"><span>5:43 AM</span><span>Tuesday</span><span>10/17/2023</span></div>
  <div class="notif"><svg><use href="#notif"/></svg><b>1</b></div>
</div>
</body>
</html>
```
FILE: styles.css
```css
* { box-sizing: border-box; }
html, body { margin: 0; height: 100%; }
body {
  width: 1366px; height: 768px; overflow: hidden;
  display: flex; flex-direction: column;
  font-family: "Open Sans", "Noto Sans", sans-serif;
  background: #f5f5f5;
}
.defs { width: 0; height: 0; position: absolute; }
.qa-t { font: 700 8px "Open Sans", sans-serif; fill: #fff; }
.qa-s { font: 700 5px "Open Sans", sans-serif; fill: #063; }
.ij-t { font: 700 9px "Open Sans", sans-serif; fill: #fff; }
.z-t { font: 700 19px "Open Sans", sans-serif; fill: #fff; }

/* tab strip */
.tabstrip {
  height: 34px; flex: none; display: flex; align-items: stretch;
  background: #03383f; padding-left: 9px; color: #eef4f4;
  font-family: "Noto Sans", sans-serif; font-size: 12px;
}
.tab {
  width: 90.670px; flex: none; display: flex; align-items: center;
  padding: 0 11px 0 10px; position: relative;
}
.tab::after {
  content: ""; position: absolute; right: 0; top: 7px; bottom: 7px; width: 1px; background: #5d8286;
}
.tab.active { background: #045a60; border-radius: 9px 9px 0 0; }
.tab.active::after { display: none; }
.fav { width: 16px; height: 16px; flex: none; }
.tt {
  flex: 1; min-width: 0; margin-left: 9px; white-space: nowrap; overflow: hidden;
  -webkit-mask-image: linear-gradient(90deg, #000 55%, transparent 100%);
  mask-image: linear-gradient(90deg, #000 55%, transparent 100%);
}
.greenmark { display: inline-block; width: 6px; height: 13px; background: #2fbf22; border: 1px solid #111; vertical-align: -2px; }
.tx { width: 9px; height: 9px; flex: none; margin-left: 12px; }
.newtab { width: 12px; height: 12px; margin: 11px 0 0 16px; flex: none; }
.wincontrols { margin-left: auto; display: flex; }
.wc { width: 46px; height: 14px; margin-top: 7px; }

/* toolbar */
.toolbar {
  height: 42px; flex: none; display: flex; align-items: center; padding: 0 0 0 14px;
  background: #045a60;
}
.nav { width: 16px; height: 16px; flex: none; margin-right: 16px; }
.nav:nth-child(3) { margin-right: 14px; }
.omnibox {
  width: 670px; height: 34px; border-radius: 17px; background: #13464e; flex: none;
  display: flex; align-items: center; padding-left: 11px;
}
.info { width: 16px; height: 16px; flex: none; }
.url {
  margin-left: 7px; width: 544px; flex: none; white-space: nowrap; overflow: hidden;
  font-family: "Noto Sans", sans-serif; font-size: 13.400px; color: #a9c2c4;
}
.url b { font-weight: 400; color: #fff; }
.ob { width: 16px; height: 16px; flex: none; margin-right: 16px; }
.ob:nth-of-type(2) { margin-left: 2px; }
.exts { display: flex; margin-left: 6px; }
.ext { width: 32px; height: 32px; display: flex; align-items: center; justify-content: center; }
.ext svg { width: 16px; height: 16px; }
.ext svg.av { width: 22px; height: 22px; }
.dots { flex-direction: column; gap: 3px; }
.dots i { width: 3px; height: 3px; border-radius: 50%; background: #fff; }

/* bookmarks */
.bookmarks {
  height: 33px; flex: none; display: flex; align-items: center; padding: 0 0 5px 14px;
  background: #045a60; color: #fff;
  font-family: "Noto Sans", sans-serif; font-size: 12px; letter-spacing: -.35px;
}
.bm { display: flex; align-items: center; gap: 8px; white-space: nowrap; flex: none; }
.bm svg { width: 16px; height: 16px; flex: none; }
.w152 { width: 152px; } .w154 { width: 154px; } .w146 { width: 146px; } .w31 { width: 31px; }
.more { width: 12px; height: 12px; margin-left: auto; flex: none; }
.bmsep { width: 1px; height: 20px; background: #6f9a9d; margin: 0 8px 0 10px; flex: none; }
.allb { margin-right: 14px; }

/* page */
.viewport { flex: 1; min-height: 0; display: flex; background: #f5f5f5; }
.page { flex: 1; min-width: 0; overflow: hidden; padding-right: 1px; }
.shift { margin-top: -49px; }
.card {
  width: 1100px; margin: 0 auto; background: #fff; border: 1px solid #d9d9d9; border-radius: 4px;
  padding: 16px; font-size: 13px; color: #444;
}
.top-grid { display: grid; grid-template-columns: 702px 1fr; gap: 24px; align-items: start; }
.row { margin-bottom: 16px; }
.two { display: grid; grid-template-columns: 1fr 1fr; gap: 24px; }
.row.two:last-child { margin-bottom: 0; }
.lbl { display: block; font-weight: 700; color: #757575; line-height: 19.500px; margin-bottom: 8px; }
.lbl em { color: #f00; font-style: normal; }
.input {
  display: block; width: 100%; height: 37.500px; padding: 0 12px;
  border: 1px solid #ced4da; border-radius: 4px; background: #fff;
  font: 13px/35px "Open Sans", sans-serif; color: #444;
}
.focused { border-color: #8fc2e8; box-shadow: 0 0 0 4px #c6e1f3; color: #333; }
.spell { text-decoration: underline wavy #e8261f 1px; text-underline-offset: 2px; }
.caret { display: inline-block; width: 1px; height: 16px; background: #111; vertical-align: -3px; }
.err { color: #e4574b; line-height: 19.500px; }
.alert {
  background: #def0f6; border: 1px solid #c9e6ee; border-radius: 4px; color: #777;
  padding: 16px; height: 144px; margin-right: 1px;
}
.alert p { margin: 0; line-height: 19.500px; }
.alert ul { margin: 16px 0 0; padding-left: 32px; color: #5cb8d8; }
.alert li { line-height: 19.500px; }
.alert a { color: #1f90d5; font-weight: 700; text-decoration: underline; }
.legend {
  margin: 36px 0 15px; padding-bottom: 0; border-bottom: 1px solid #ddd;
  font-size: 24px; font-weight: 400; color: #737373; line-height: 36px;
}
.actions { display: flex; justify-content: space-between; margin-top: 20px; }
.btn {
  height: 37.500px; min-width: 55px; padding: 0 12px; border: 1px solid #ced4da; border-radius: 4px; background: #fff;
  font: 13px "Open Sans", sans-serif; color: #444;
}
.btn.primary { background: #1a8dcc; border-color: #1479b5; color: #fff; min-width: 82px; }
.foot {
  display: flex; justify-content: center; gap: 7px; margin-top: 39px;
  font-size: 13px; color: #3f92c6; line-height: 20px;
}
.foot span { color: #e08a5c; }

.scrollbar { width: 15px; flex: none; background: #f1f1f1; display: flex; flex-direction: column; }
.arrow { width: 15px; height: 15px; flex: none; }
.thumb { width: 15px; height: 346px; margin-top: 171px; background: #a9a9a9; flex: none; }
.arrow.down { margin-top: auto; }

/* taskbar */
.taskbar {
  height: 81px; flex: none; display: flex; background: #0e0e0e; color: #fff;
  font-family: "Noto Sans", sans-serif; font-size: 12px;
}
.start { width: 48px; flex: none; display: flex; align-items: center; justify-content: center; }
.start svg { width: 16px; height: 16px; }
.search {
  width: 344px; flex: none; background: #3f3f3f; border: 1px solid #5f5f5f;
  display: flex; align-items: center; padding-left: 11px; gap: 11px; color: #d9d9d9; font-size: 14px;
}
.search svg { width: 17px; height: 17px; flex: none; }
.apps { display: grid; grid-template-columns: repeat(12, 49px); grid-auto-rows: 40.500px; margin-left: 2.500px; flex: none; }
.app { display: flex; align-items: center; justify-content: center; position: relative; }
.app svg { width: 24px; height: 24px; }
.app.run::after { content: ""; position: absolute; left: 4px; right: 4px; bottom: 0; height: 2px; background: #64b5f0; }
.app.act { background: #333; }
.app.act::after { left: 0; right: 0; }
.weather { display: flex; align-items: center; gap: 8px; margin-left: 64px; flex: none; font-size: 13.500px; }
.weather svg { width: 24px; height: 24px; }
.caretup { width: 12px; height: 7px; margin: 37px 0 0 18.500px; flex: none; }
.tray { display: grid; grid-template-columns: repeat(4, 24px); grid-auto-rows: 40px; margin-left: 5px; flex: none; }
.tray span { display: flex; align-items: center; justify-content: center; }
.tray svg { width: 16px; height: 16px; }
.clock {
  width: 72px; margin-left: 1px; display: flex; flex-direction: column; align-items: center; justify-content: center;
  gap: 4px; line-height: 17px; flex: none; letter-spacing: -.3px;
}
.notif { position: relative; margin-left: 12px; padding-top: 32px; flex: none; width: 32px; }
.notif svg { width: 16px; height: 16px; }
.notif b {
  position: absolute; left: 7px; top: 40px; width: 16px; height: 16px; border-radius: 50%;
  background: #3a3a3a; border: 1px solid #888; font-size: 10px; line-height: 14px; text-align: center;
}
```
